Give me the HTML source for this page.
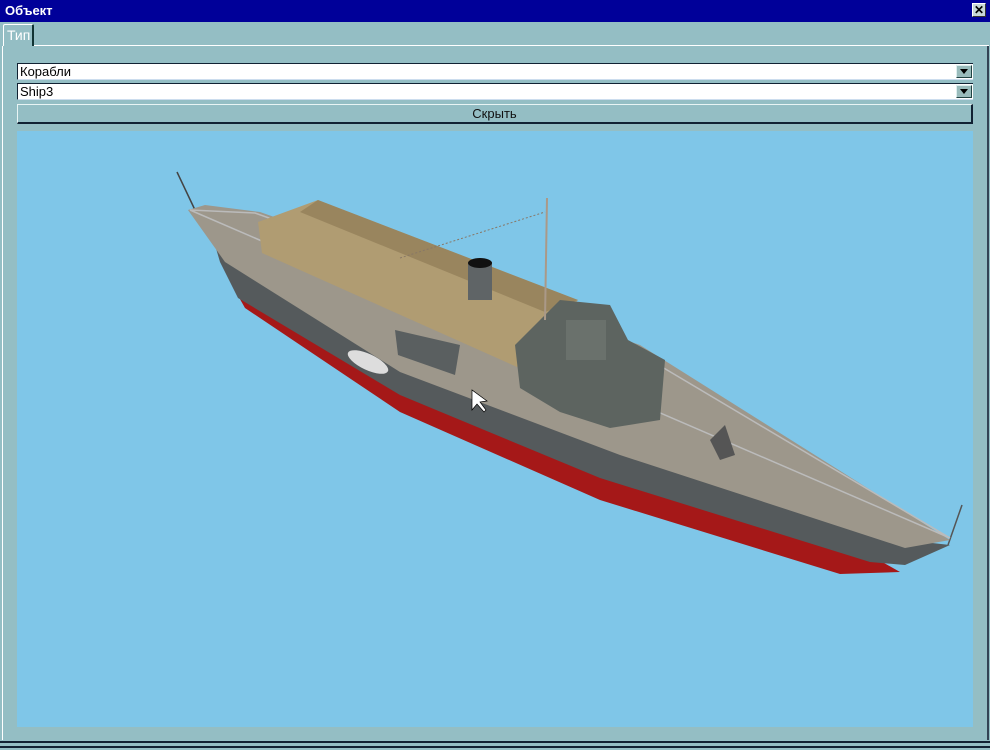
<!DOCTYPE html>
<html><head><meta charset="utf-8"><style>
body{margin:0;width:990px;height:750px;background:#94bec4;font-family:"Liberation Sans",sans-serif;position:relative;overflow:hidden}
.title{position:absolute;left:0;top:0;width:990px;height:22px;background:#000099;color:#fff;font-weight:bold;font-size:13px;line-height:21px;text-indent:5px}
.x{position:absolute;right:4px;top:3px;width:14px;height:14px;background:#c8d8d8;border:1px solid #fff;border-right-color:#333;border-bottom-color:#333;box-sizing:border-box;font-size:12px;line-height:12px;text-align:center;color:#000;text-indent:0}
.tab{position:absolute;left:3px;top:24px;width:31px;height:22px;border-left:1px solid #fff;border-top:1px solid #fff;border-right:2px solid #133;color:#fff;font-size:14px;line-height:20px;text-indent:3px;box-sizing:border-box;border-radius:2px 2px 0 0}
.line{position:absolute;left:34px;top:45px;width:955px;height:1px;background:#fff}
.vl{position:absolute;left:2px;top:46px;width:1px;height:694px;background:#fff}
.vr{position:absolute;left:987px;top:46px;width:2px;height:694px;background:#345}
.inp{position:absolute;left:17px;width:956px;height:17px;background:#fff;border-left:1px solid #123;border-top:1px solid #123;border-bottom:1px solid #cde;box-sizing:border-box;font-size:13px;line-height:15px;padding-left:2px}
.dd{position:absolute;right:1px;top:1px;width:16px;height:13px;background:#9bb;border:1px solid #dee;border-right-color:#244;border-bottom-color:#244;box-sizing:border-box}
.dd:after{content:"";position:absolute;left:3px;top:3px;border-left:4px solid transparent;border-right:4px solid transparent;border-top:5px solid #000}
.btn{position:absolute;left:17px;top:104px;width:956px;height:20px;border:1px solid #e8f4f4;border-right:2px solid #123;border-bottom:2px solid #123;box-sizing:border-box;text-align:center;font-size:13px;line-height:17px;color:#111}
.view{position:absolute;left:17px;top:131px;width:956px;height:596px;background:#7fc6e8}
.b1{position:absolute;left:0;top:741px;width:990px;height:2px;background:#123}
.b2{position:absolute;left:0;top:746px;width:990px;height:2px;background:#123}
</style></head><body>
<div class="title">Объект<div class="x">✕</div></div>
<div class="tab">Тип</div><div class="line"></div><div class="vl"></div><div class="vr"></div>
<div class="inp" style="top:63px">Корабли<div class="dd"></div></div>
<div class="inp" style="top:83px">Ship3<div class="dd"></div></div>
<div class="btn">Скрыть</div>
<div class="view"></div>
<svg style="position:absolute;left:0;top:0" width="990" height="750">
<line x1="177" y1="172" x2="195" y2="210" stroke="#444" stroke-width="1.5"/>
<line x1="962" y1="505" x2="948" y2="545" stroke="#555" stroke-width="1.5"/>
<polygon points="232,285 400,388 600,470 870,555 900,572 840,574 600,500 400,412 245,308" fill="#a51818"/>
<polygon points="215,245 400,365 620,450 905,540 950,545 905,565 870,562 600,478 400,395 238,298 220,262" fill="#555a5c"/>
<polygon points="188,210 205,205 260,212 640,345 950,540 905,548 620,455 400,372 225,262" fill="#9d978b"/>
<polygon points="190,210 255,213 625,345 950,538" fill="none" stroke="#bbb" stroke-width="1.5"/>
<polygon points="258,222 318,200 578,300 517,367 262,253" fill="#b09c72"/>
<polygon points="318,200 578,300 545,312 300,212" fill="#8b7652" opacity=".6"/>
<rect x="468" y="262" width="24" height="38" fill="#5f6466"/>
<ellipse cx="480" cy="263" rx="12" ry="5" fill="#111"/>
<polygon points="515,345 560,300 610,305 628,340 665,360 660,420 610,428 560,412 520,388" fill="#5d6460"/>
<rect x="566" y="320" width="40" height="40" fill="#6a716c"/>
<polygon points="395,330 460,345 455,375 398,355" fill="#5a5f60"/>
<ellipse cx="368" cy="362" rx="22" ry="8" fill="#ddd" transform="rotate(25 368 362)"/>
<line x1="547" y1="198" x2="545" y2="320" stroke="#a98" stroke-width="2"/>
<line x1="400" y1="258" x2="545" y2="212" stroke="#876" stroke-width="1" stroke-dasharray="2 2"/>
<polygon points="710,440 725,425 735,455 720,460" fill="#555"/>
<polygon points="472,390 472,410 477,404 484,412 486,410 480,402 487,401" fill="#fff" stroke="#000" stroke-width=".7"/>
</svg>
<div class="b1"></div><div class="b2"></div>
</body></html>
